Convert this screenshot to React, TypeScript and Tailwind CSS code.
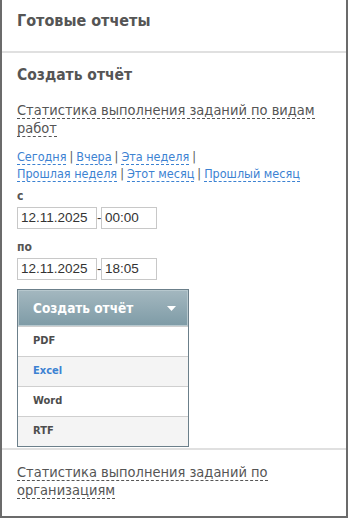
import { type ReactNode } from 'react';

const periods = [
  ['Сегодня', 'Вчера', 'Эта неделя'],
  ['Прошлая неделя', 'Этот месяц', 'Прошлый месяц'],
];

const formats = [
  { label: 'PDF', bg: 'bg-white', color: 'text-[#4d4d4d]' },
  { label: 'Excel', bg: 'bg-[#f4f4f4]', color: 'text-[#3c82d2]' },
  { label: 'Word', bg: 'bg-white', color: 'text-[#4d4d4d]' },
  { label: 'RTF', bg: 'bg-[#f4f4f4]', color: 'text-[#4d4d4d]' },
];

function DashedLink({ children }: { children: ReactNode }) {
  return (
    <span className="border-b border-dashed border-[#3c82d2] text-[#3c82d2]">
      {children}
    </span>
  );
}

function DateRow({ date, time }: { date: string; time: string }) {
  return (
    <div className="flex items-center font-['Liberation_Sans',sans-serif]">
      <div className="flex h-[22px] w-[80px] items-center border border-[#c8c8c8] px-[3px] text-[13.5px] text-[#333]">
        {date}
      </div>
      <span className="w-[4px] text-[13px] text-[#333]">-</span>
      <div className="flex h-[22px] w-[56px] items-center border border-[#c8c8c8] px-[3px] text-[13.5px] text-[#333]">
        {time}
      </div>
    </div>
  );
}

export default function App() {
  return (
    <div
      className="flex h-[518px] w-[348px] flex-col border-x-2 border-b-2 border-[#6b6b6b] bg-white text-[#555]"
      style={{ fontFamily: 'Tahoma, "DejaVu Sans Condensed", "Liberation Sans", sans-serif' }}
    >
      <div className="h-[53px] border-b-2 border-[#e0e0e0] px-[15px] pt-[12px]">
        <h2 className="text-[16px] font-bold leading-[18px]">Готовые отчеты</h2>
      </div>

      <div className="h-[397px] border-b-2 border-[#e0e0e0] px-[15px] pt-[12px]">
        <h3 className="text-[15.5px] font-bold leading-[20px]">Создать отчёт</h3>
        <p className="mt-[16px] text-[14.5px] leading-[18px]">
          <span className="border-b border-dashed border-[#555]">
            Статистика выполнения заданий по видам работ
          </span>
        </p>

        <div className="mt-[11px] text-[12.5px] leading-[17px] text-[#555]">
          {periods.map((row, r) => (
            <div key={r}>
              {row.map((p, i) => (
                <span key={p}>
                  <DashedLink>{p}</DashedLink>
                  {(i < row.length - 1 || r === 0) && <span className="mx-[3px]">|</span>}
                </span>
              ))}
            </div>
          ))}
        </div>

        <div className="mt-[6px] text-[12px] font-bold leading-[16px]">с</div>
        <div className="mt-[3px]">
          <DateRow date="12.11.2025" time="00:00" />
        </div>
        <div className="mt-[10px] text-[12px] font-bold leading-[16px]">по</div>
        <div className="mt-[3px]">
          <DateRow date="12.11.2025" time="18:05" />
        </div>

        <div className="mt-[9px] w-[172px] border border-[#6b7f8a]">
          <div className="flex h-[36px] items-center justify-between border border-[#b7c8ce] bg-gradient-to-b from-[#a3b7bf] to-[#7f9ca7] pl-[14px] pr-[11px]">
            <span className="text-[13.5px] font-bold text-white">Создать отчёт</span>
            <svg width="9" height="5" viewBox="0 0 9 5">
              <path d="M0 0h9L4.5 5z" fill="#fff" />
            </svg>
          </div>
          {formats.map((f) => (
            <div
              key={f.label}
              className={`flex h-[30px] items-center border-t border-[#cfcfcf] px-[15px] text-[11px] font-bold ${f.bg} ${f.color}`}
            >
              {f.label}
            </div>
          ))}
        </div>
      </div>

      <div className="px-[15px] pt-[13px]">
        <p className="text-[14.5px] leading-[18px]">
          <span className="border-b border-dashed border-[#555]">
            Статистика выполнения заданий по организациям
          </span>
        </p>
      </div>
    </div>
  );
}
